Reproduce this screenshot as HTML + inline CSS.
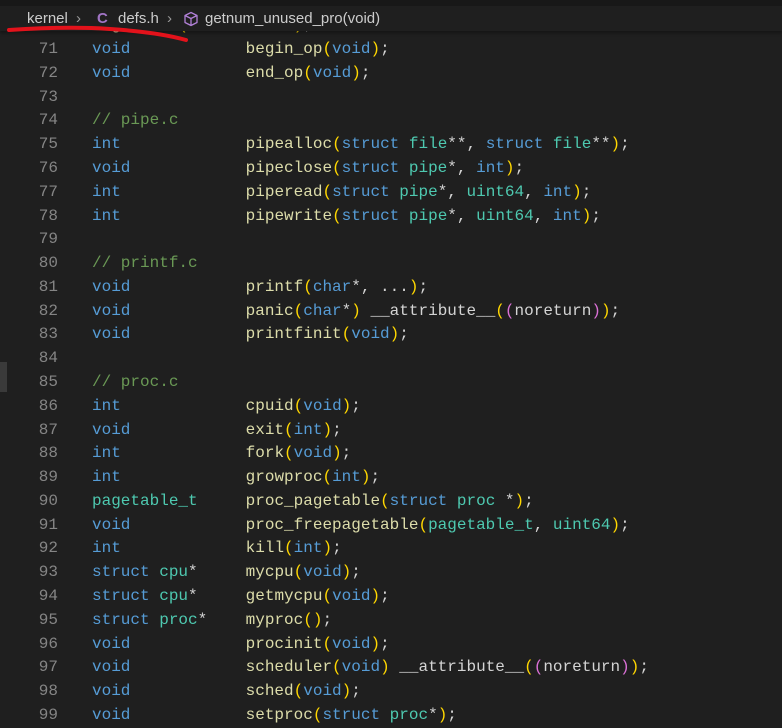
<!DOCTYPE html>
<html><head><meta charset="utf-8"><style>
html,body{margin:0;padding:0;width:782px;height:716px;overflow:hidden;background:#1f1f1f;}
.code{position:absolute;left:0;top:14.3px;font-family:"Liberation Mono",monospace;font-size:16px;line-height:23.78px;color:#d4d4d4;white-space:pre;}
.ln{display:inline-block;width:58px;text-align:right;color:#858585;}
.tx{display:inline-block;margin-left:34px;}
.k{color:#569cd6}.t{color:#4ec9b0}.f{color:#dcdcaa}.p{color:#ffd700}.q{color:#da70d6}.c{color:#6a9955}
.bc{position:absolute;left:0;top:0;width:782px;height:31px;background:#1f1f1f;font-family:"Liberation Sans",sans-serif;font-size:15px;color:#cccccc;box-shadow:0 2px 3px rgba(0,0,0,0.35);}
.bc span{position:absolute;top:10px;}
</style></head><body>
<div class="code"><div><span class="ln">70</span><span class="tx"><span class="f">log_write</span><span class="p">(</span><span class="k">struct</span> <span class="t">buf</span>*<span class="p">)</span>;</span></div
><div><span class="ln">71</span><span class="tx"><span class="k">void</span>            <span class="f">begin_op</span><span class="p">(</span><span class="k">void</span><span class="p">)</span>;</span></div
><div><span class="ln">72</span><span class="tx"><span class="k">void</span>            <span class="f">end_op</span><span class="p">(</span><span class="k">void</span><span class="p">)</span>;</span></div
><div><span class="ln">73</span></div
><div><span class="ln">74</span><span class="tx"><span class="c">// pipe.c</span></span></div
><div><span class="ln">75</span><span class="tx"><span class="k">int</span>             <span class="f">pipealloc</span><span class="p">(</span><span class="k">struct</span> <span class="t">file</span>**, <span class="k">struct</span> <span class="t">file</span>**<span class="p">)</span>;</span></div
><div><span class="ln">76</span><span class="tx"><span class="k">void</span>            <span class="f">pipeclose</span><span class="p">(</span><span class="k">struct</span> <span class="t">pipe</span>*, <span class="k">int</span><span class="p">)</span>;</span></div
><div><span class="ln">77</span><span class="tx"><span class="k">int</span>             <span class="f">piperead</span><span class="p">(</span><span class="k">struct</span> <span class="t">pipe</span>*, <span class="t">uint64</span>, <span class="k">int</span><span class="p">)</span>;</span></div
><div><span class="ln">78</span><span class="tx"><span class="k">int</span>             <span class="f">pipewrite</span><span class="p">(</span><span class="k">struct</span> <span class="t">pipe</span>*, <span class="t">uint64</span>, <span class="k">int</span><span class="p">)</span>;</span></div
><div><span class="ln">79</span></div
><div><span class="ln">80</span><span class="tx"><span class="c">// printf.c</span></span></div
><div><span class="ln">81</span><span class="tx"><span class="k">void</span>            <span class="f">printf</span><span class="p">(</span><span class="k">char</span>*, ...<span class="p">)</span>;</span></div
><div><span class="ln">82</span><span class="tx"><span class="k">void</span>            <span class="f">panic</span><span class="p">(</span><span class="k">char</span>*<span class="p">)</span> __attribute__<span class="p">(</span><span class="q">(</span>noreturn<span class="q">)</span><span class="p">)</span>;</span></div
><div><span class="ln">83</span><span class="tx"><span class="k">void</span>            <span class="f">printfinit</span><span class="p">(</span><span class="k">void</span><span class="p">)</span>;</span></div
><div><span class="ln">84</span></div
><div><span class="ln">85</span><span class="tx"><span class="c">// proc.c</span></span></div
><div><span class="ln">86</span><span class="tx"><span class="k">int</span>             <span class="f">cpuid</span><span class="p">(</span><span class="k">void</span><span class="p">)</span>;</span></div
><div><span class="ln">87</span><span class="tx"><span class="k">void</span>            <span class="f">exit</span><span class="p">(</span><span class="k">int</span><span class="p">)</span>;</span></div
><div><span class="ln">88</span><span class="tx"><span class="k">int</span>             <span class="f">fork</span><span class="p">(</span><span class="k">void</span><span class="p">)</span>;</span></div
><div><span class="ln">89</span><span class="tx"><span class="k">int</span>             <span class="f">growproc</span><span class="p">(</span><span class="k">int</span><span class="p">)</span>;</span></div
><div><span class="ln">90</span><span class="tx"><span class="t">pagetable_t</span>     <span class="f">proc_pagetable</span><span class="p">(</span><span class="k">struct</span> <span class="t">proc</span> *<span class="p">)</span>;</span></div
><div><span class="ln">91</span><span class="tx"><span class="k">void</span>            <span class="f">proc_freepagetable</span><span class="p">(</span><span class="t">pagetable_t</span>, <span class="t">uint64</span><span class="p">)</span>;</span></div
><div><span class="ln">92</span><span class="tx"><span class="k">int</span>             <span class="f">kill</span><span class="p">(</span><span class="k">int</span><span class="p">)</span>;</span></div
><div><span class="ln">93</span><span class="tx"><span class="k">struct</span> <span class="t">cpu</span>*     <span class="f">mycpu</span><span class="p">(</span><span class="k">void</span><span class="p">)</span>;</span></div
><div><span class="ln">94</span><span class="tx"><span class="k">struct</span> <span class="t">cpu</span>*     <span class="f">getmycpu</span><span class="p">(</span><span class="k">void</span><span class="p">)</span>;</span></div
><div><span class="ln">95</span><span class="tx"><span class="k">struct</span> <span class="t">proc</span>*    <span class="f">myproc</span><span class="p">()</span>;</span></div
><div><span class="ln">96</span><span class="tx"><span class="k">void</span>            <span class="f">procinit</span><span class="p">(</span><span class="k">void</span><span class="p">)</span>;</span></div
><div><span class="ln">97</span><span class="tx"><span class="k">void</span>            <span class="f">scheduler</span><span class="p">(</span><span class="k">void</span><span class="p">)</span> __attribute__<span class="p">(</span><span class="q">(</span>noreturn<span class="q">)</span><span class="p">)</span>;</span></div
><div><span class="ln">98</span><span class="tx"><span class="k">void</span>            <span class="f">sched</span><span class="p">(</span><span class="k">void</span><span class="p">)</span>;</span></div
><div><span class="ln">99</span><span class="tx"><span class="k">void</span>            <span class="f">setproc</span><span class="p">(</span><span class="k">struct</span> <span class="t">proc</span>*<span class="p">)</span>;</span></div
></div>
<div style="position:absolute;left:0;top:362px;width:7px;height:30px;background:#3a3a3a"></div>
<div class="bc">
<div style="position:absolute;left:0;top:0;width:782px;height:6px;background:#181818"></div>
<span style="left:27px">kernel</span>
<span style="left:76px;color:#9a9a9a">&#8250;</span>
<span style="left:97px;color:#a074c4;font-weight:bold">C</span>
<span style="left:118px">defs.h</span>
<span style="left:167px;color:#9a9a9a">&#8250;</span>
<svg style="position:absolute;left:183px;top:11px" width="16" height="16" viewBox="0 0 16 16"><path d="M8 1.5 L14 4.5 L14 11.5 L8 14.5 L2 11.5 L2 4.5 Z M2 4.5 L8 7.5 L14 4.5 M8 7.5 L8 14.5" fill="none" stroke="#b180d7" stroke-width="1.3" stroke-linejoin="round"/></svg>
<span style="left:205px">getnum_unused_pro(void)</span>
</div>
<svg style="position:absolute;left:0;top:0" width="200" height="50"><path d="M9 30 C40 28 80 27 110 29 C140 31 165 34 186 40" fill="none" stroke="#e3121b" stroke-width="4" stroke-linecap="round"/></svg>
</body></html>
